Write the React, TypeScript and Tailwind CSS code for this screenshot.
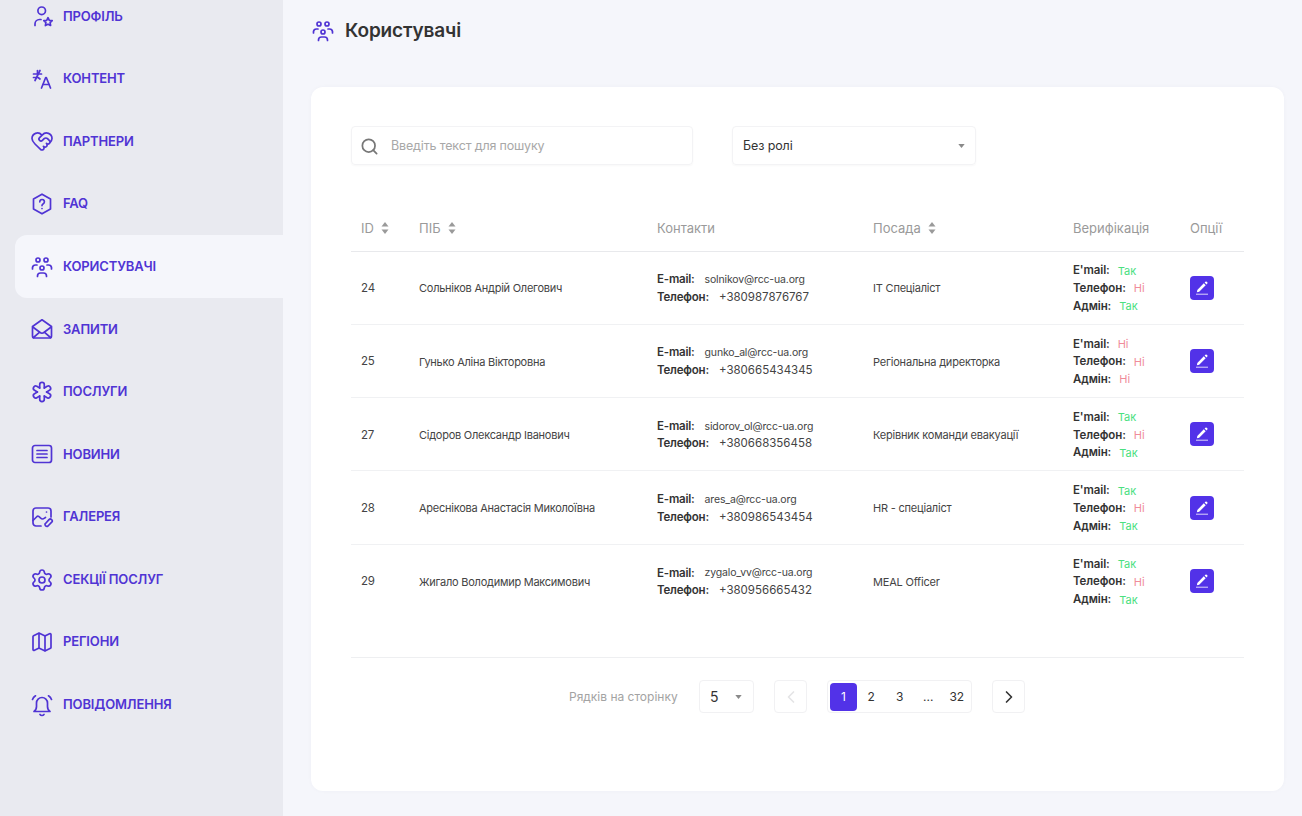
import { ChevronLeft, ChevronRight, HeartHandshake, Map as MapIcon, Search, Settings } from "lucide-react"
import type { ReactNode } from "react"

const ICON_STROKE = 1.7

function Glyph({ children, size = 24 }: { children: ReactNode; size?: number }) {
	return (
		<svg
			width={size}
			height={size}
			viewBox="0 0 24 24"
			fill="none"
			stroke="currentColor"
			strokeWidth={ICON_STROKE}
			strokeLinecap="round"
			strokeLinejoin="round"
			className="shrink-0"
		>
			{children}
		</svg>
	)
}

function ProfileIcon() {
	return (
		<Glyph>
			<circle cx="11.7" cy="6.8" r="3.8" />
			<path d="M5 21.500v-1.500a4.500 4.500 0 0 1 4.500-4.500h1.500" />
			<path d="m18 13.700 1.300 2.700 2.900.3-2.100 2 .5 2.800-2.600-1.300-2.600 1.300.5-2.800-2.100-2 2.900-.3z" />
		</Glyph>
	)
}

function TranslateIcon() {
	return (
		<Glyph>
			<path d="M3.500 7h8" />
			<path d="M7.500 3.500V7" />
			<path d="M10 3.500 5 13.500" />
			<path d="M3.500 10.500H8l2 1.500" />
			<path d="m11.500 21 4.200-10.500h.6L20.500 21" />
			<path d="M13 17.500h6" />
		</Glyph>
	)
}

function FaqIcon() {
	return (
		<Glyph>
			<path d="M12 2.200 20.500 7v10L12 21.800 3.500 17V7z" />
			<path d="M9.800 9.800a2.300 2.300 0 1 1 3.500 2c-.8.500-1.300 1-1.300 1.800" />
			<path d="M12 16.500h.01" />
		</Glyph>
	)
}

function UsersIcon({ size = 24 }: { size?: number }) {
	return (
		<Glyph size={size}>
			<circle cx="8" cy="5" r="2" />
			<circle cx="16" cy="5" r="2" />
			<circle cx="12" cy="13" r="2" />
			<path d="M2.500 14v-1.500a3 3 0 0 1 3-2.500H7" />
			<path d="M21.500 14v-1.500a3 3 0 0 0-3-2.500H17" />
			<path d="M7.500 21.500v-.5a3 3 0 0 1 3-3h3a3 3 0 0 1 3 3v.5" />
		</Glyph>
	)
}

function MailIcon() {
	return (
		<Glyph>
			<path d="M2.500 9.500 12 2.800l9.500 6.700V19a2 2 0 0 1-2 2h-15a2 2 0 0 1-2-2z" />
			<path d="m2.800 10 7 5.300a3.500 3.500 0 0 0 4.400 0l7-5.300" />
			<path d="m3.500 20.500 6.200-5.300" />
			<path d="m20.500 20.500-6.200-5.300" />
		</Glyph>
	)
}

function ServicesIcon() {
	const arms = [0, 60, 120, 180, 240, 300]
	return (
		<Glyph>
			{arms.map(function renderArm(angle) {
				return (
					<path
						key={angle}
						d="M9.700 8V4.700a2.300 2.300 0 0 1 4.600 0V8"
						transform={`rotate(${angle} 12 12)`}
					/>
				)
			})}
		</Glyph>
	)
}

function NewsIcon() {
	return (
		<Glyph>
			<rect x="2.500" y="3.500" width="19" height="17" rx="2.500" />
			<path d="M7 8.500h10" />
			<path d="M7 12h10" />
			<path d="M7 15.500h10" />
		</Glyph>
	)
}

function GalleryIcon() {
	return (
		<Glyph>
			<path d="M11 21H6a3 3 0 0 1-3-3V6a3 3 0 0 1 3-3h12a3 3 0 0 1 3 3v6" />
			<path d="M3 15.500 7 11.500c2-1.500 3.500 2.500 5.500 2.500 1.200 0 2-1 3-1.500" />
			<path d="M16.500 7h.01" />
			<path d="m15.500 18.500 3.500-3.800a1.800 1.800 0 0 1 2.700 2.500L18 21a1.900 1.900 0 0 1-2.700-2.500z" />
		</Glyph>
	)
}

function BellIcon() {
	return (
		<Glyph>
			<path d="M4 18.500c1.500-1 2.500-2.500 2.500-5V10a5.500 5.500 0 0 1 11 0v3.500c0 2.500 1 4 2.500 5z" />
			<path d="M10 21.500a2.500 2.500 0 0 0 4 0" />
			<path d="M2.500 6.500C3 5 4 3.700 5.500 2.800" />
			<path d="M21.500 6.500C21 5 20 3.700 18.500 2.800" />
		</Glyph>
	)
}

function PencilIcon() {
	return (
		<svg width="14" height="14" viewBox="0 0 14 14" fill="none">
			<path d="M8.800 2.300 2.300 9 1.900 11.300 4.200 10.800 10.700 4.200z" fill="white" />
			<path d="M9.600 1.500 11.500 3.400 12.300 2.600a1 1 0 0 0 0-1.300L11.700.7a1 1 0 0 0-1.300 0z" fill="white" />
			<path d="M1 13.200h12" stroke="white" strokeWidth="0.8" />
		</svg>
	)
}

function SortArrows() {
	return (
		<svg width="8" height="14" viewBox="0 0 8 14" className="shrink-0 fill-[#9a9a9a]">
			<path d="M4 1 7.500 5.500H.5z" />
			<path d="M4 13 .5 8.500h7z" />
		</svg>
	)
}

function Caret() {
	return (
		<svg width="7" height="4" viewBox="0 0 8 5" className="shrink-0 fill-[#8a8a8a]">
			<path d="M0 0h8L4 5z" />
		</svg>
	)
}

const navItems: ReadonlyArray<{ label: string; icon: ReactNode; active?: boolean }> = [
	{ label: "Профіль", icon: <ProfileIcon /> },
	{ label: "Контент", icon: <TranslateIcon /> },
	{ label: "Партнери", icon: <HeartHandshake size={24} strokeWidth={ICON_STROKE} /> },
	{ label: "FAQ", icon: <FaqIcon /> },
	{ label: "Користувачі", icon: <UsersIcon />, active: true },
	{ label: "Запити", icon: <MailIcon /> },
	{ label: "Послуги", icon: <ServicesIcon /> },
	{ label: "Новини", icon: <NewsIcon /> },
	{ label: "Галерея", icon: <GalleryIcon /> },
	{ label: "Секції послуг", icon: <Settings size={24} strokeWidth={ICON_STROKE} /> },
	{ label: "Регіони", icon: <MapIcon size={24} strokeWidth={ICON_STROKE} /> },
	{ label: "Повідомлення", icon: <BellIcon /> }
]

interface UserRow {
	id: number
	name: string
	email: string
	phone: string
	position: string
	emailOk: boolean
	phoneOk: boolean
	adminOk: boolean
}

const users: ReadonlyArray<UserRow> = [
	{ id: 24, name: "Сольніков Андрій Олегович", email: "solnikov@rcc-ua.org", phone: "+380987876767", position: "IT Спеціаліст", emailOk: true, phoneOk: false, adminOk: true },
	{ id: 25, name: "Гунько Аліна Вікторовна", email: "gunko_al@rcc-ua.org", phone: "+380665434345", position: "Регіональна директорка", emailOk: false, phoneOk: false, adminOk: false },
	{ id: 27, name: "Сідоров Олександр Іванович", email: "sidorov_ol@rcc-ua.org", phone: "+380668356458", position: "Керівник команди евакуації", emailOk: true, phoneOk: false, adminOk: true },
	{ id: 28, name: "Ареснікова Анастасія Миколоївна", email: "ares_a@rcc-ua.org", phone: "+380986543454", position: "HR - спеціаліст", emailOk: true, phoneOk: false, adminOk: true },
	{ id: 29, name: "Жигало Володимир Максимович", email: "zygalo_vv@rcc-ua.org", phone: "+380956665432", position: "MEAL Officer", emailOk: true, phoneOk: false, adminOk: true }
]

function Sidebar() {
	return (
		<aside className="-mt-[15px] w-[283px] shrink-0 bg-[#e9eaf0] pl-[15px]">
			{navItems.map(function renderNavItem(item) {
				return (
					<div
						key={item.label}
						className={`flex h-[62.6px] items-center gap-[9px] rounded-l-xl pl-[15px] text-[#5034d4] ${item.active ? "bg-[#f5f6fb]" : ""}`}
					>
						{item.icon}
						<span className="text-[13px] font-semibold tracking-[-0.15px] uppercase">{item.label}</span>
					</div>
				)
			})}
		</aside>
	)
}

function VerifyLine({ label, ok }: { label: string; ok: boolean }) {
	return (
		<div className="flex h-[17.7px] items-center gap-[8px]">
			<span className="text-[11.5px] font-semibold tracking-[-0.1px] text-[#333]">{label}</span>
			<span className={`text-[11px] ${ok ? "text-[#4ae07f]" : "text-[#f08c9a]"}`}>{ok ? "Так" : "Ні"}</span>
		</div>
	)
}

function ContactLine({ label, value, valueClass }: { label: string; value: string; valueClass: string }) {
	return (
		<div className="flex h-[17.7px] items-center gap-[10px]">
			<span className="text-[11.5px] font-semibold tracking-[-0.2px] text-[#333]">{label}</span>
			<span className={`text-[#444] ${valueClass}`}>{value}</span>
		</div>
	)
}

function UsersTable() {
	return (
		<table className="w-[893px] table-fixed border-collapse text-left">
			<colgroup>
				<col className="w-[58px]" />
				<col className="w-[238px]" />
				<col className="w-[216px]" />
				<col className="w-[200px]" />
				<col className="w-[117px]" />
				<col className="w-[64px]" />
			</colgroup>
			<thead>
				<tr className="h-[46px] border-b border-[#e8e9ec] text-[13px] font-normal text-[#9a9a9a]">
					<th className="pl-[10px] pt-[1px] font-normal">
						<span className="flex items-center gap-[7px]">ID <SortArrows /></span>
					</th>
					<th className="pl-[10px] pt-[1px] font-normal">
						<span className="flex items-center gap-[7px]">ПІБ <SortArrows /></span>
					</th>
					<th className="pl-[10px] pt-[1px] font-normal">Контакти</th>
					<th className="pl-[10px] pt-[1px] font-normal">
						<span className="flex items-center gap-[7px]">Посада <SortArrows /></span>
					</th>
					<th className="pl-[10px] pt-[1px] font-normal">Верифікація</th>
					<th className="pl-[10px] pt-[1px] font-normal">Опції</th>
				</tr>
			</thead>
			<tbody>
				{users.map(function renderUser(user, index) {
					return (
						<tr
							key={user.id}
							className={`h-[73.3px] ${index === users.length - 1 ? "" : "border-b border-[#f0f1f3]"}`}
						>
							<td className="pl-[10px] pt-[2px] text-[11.5px] tracking-[-0.2px] text-[#444]">{user.id}</td>
							<td className="pl-[10px] pt-[2px] text-[11px] tracking-[-0.25px] text-[#444]">{user.name}</td>
							<td className="pl-[10px] pt-[2px]">
								<ContactLine label="E-mail:" value={user.email} valueClass="text-[10.5px] tracking-[-0.15px]" />
								<ContactLine label="Телефон:" value={user.phone} valueClass="text-[11.5px]" />
							</td>
							<td className="pl-[10px] pt-[2px] text-[11px] tracking-[-0.2px] text-[#444]">{user.position}</td>
							<td className="pl-[10px] pt-[2px]">
								<VerifyLine label="E'mail:" ok={user.emailOk} />
								<VerifyLine label="Телефон:" ok={user.phoneOk} />
								<VerifyLine label="Адмін:" ok={user.adminOk} />
							</td>
							<td className="pl-[10px]">
								<button className="flex size-[24px] items-center justify-center rounded-[4px] bg-[#5232e8]">
									<PencilIcon />
								</button>
							</td>
						</tr>
					)
				})}
			</tbody>
		</table>
	)
}

function Pagination() {
	const pages = ["2", "3", "...", "32"]
	return (
		<div className="flex items-center pl-[218px] pt-[22px]">
			<span className="w-[110px] text-[12px] text-[#a3a3a3]">Рядків на сторінку</span>
			<div className="ml-[20px] flex h-[33px] w-[55px] items-center justify-between rounded-[4px] border border-[#f1f1f3] pl-[10px] pr-[11px] text-[14px] text-[#333]">
				5
				<Caret />
			</div>
			<div className="ml-[20px] flex h-[33px] w-[33px] items-center justify-center rounded-[4px] border border-[#f1f1f3] text-[#e4e4e6]">
				<ChevronLeft size={20} strokeWidth={2} />
			</div>
			<div className="ml-[20px] flex h-[33px] w-[145px] items-center rounded-[4px] border border-[#f1f1f3] pl-[2px] text-[12px] text-[#333]">
				<span className="flex h-[28px] w-[27px] items-center justify-center rounded-[4px] bg-[#5232e8] text-white">1</span>
				{pages.map(function renderPage(page) {
					return (
						<span key={page} className="flex h-[28px] w-[28.500px] items-center justify-center">
							{page}
						</span>
					)
				})}
			</div>
			<div className="ml-[20px] flex h-[33px] w-[33px] items-center justify-center rounded-[4px] border border-[#f1f1f3] text-[#333]">
				<ChevronRight size={20} strokeWidth={2} />
			</div>
		</div>
	)
}

export default function App() {
	return (
		<div className="flex h-[816px] overflow-hidden bg-[#f5f6fb] font-['Inter',sans-serif]">
			<Sidebar />
			<main className="flex-1 pl-[28px] pr-[19px]">
				<div className="flex h-[87px] items-start gap-[10px] pt-[19px] text-[#5034d4]">
					<UsersIcon />
					<h1 className="text-[19px] leading-[24px] font-semibold tracking-[-0.15px] text-[#333]">Користувачі</h1>
				</div>
				<section className="h-[704px] rounded-xl bg-white px-[40px] pt-[39px] shadow-[0_0_4px_rgba(60,60,90,0.03)]">
					<div className="flex gap-[39px]">
						<div className="flex h-[39px] w-[342px] items-center gap-[12px] rounded-[4px] border border-[#f3f3f5] pl-[8px] pt-[1px] text-[12.5px] tracking-[-0.15px] text-[#a8a8a8] shadow-[0_1px_2px_rgba(0,0,0,0.03)]">
							<Search size={19} strokeWidth={2.2} className="text-[#777]" />
							Введіть текст для пошуку
						</div>
						<div className="flex h-[39px] w-[244px] items-center justify-between rounded-[4px] border border-[#f3f3f5] px-[10px] pt-[1px] text-[12.5px] tracking-[-0.1px] text-[#333] shadow-[0_1px_2px_rgba(0,0,0,0.03)]">
							Без ролі
							<Caret />
						</div>
					</div>
					<div className="mt-[40px] w-[893px]">
						<UsersTable />
						<div className="mt-[40px] border-t border-[#eeeff1]">
							<Pagination />
						</div>
					</div>
				</section>
			</main>
		</div>
	)
}
